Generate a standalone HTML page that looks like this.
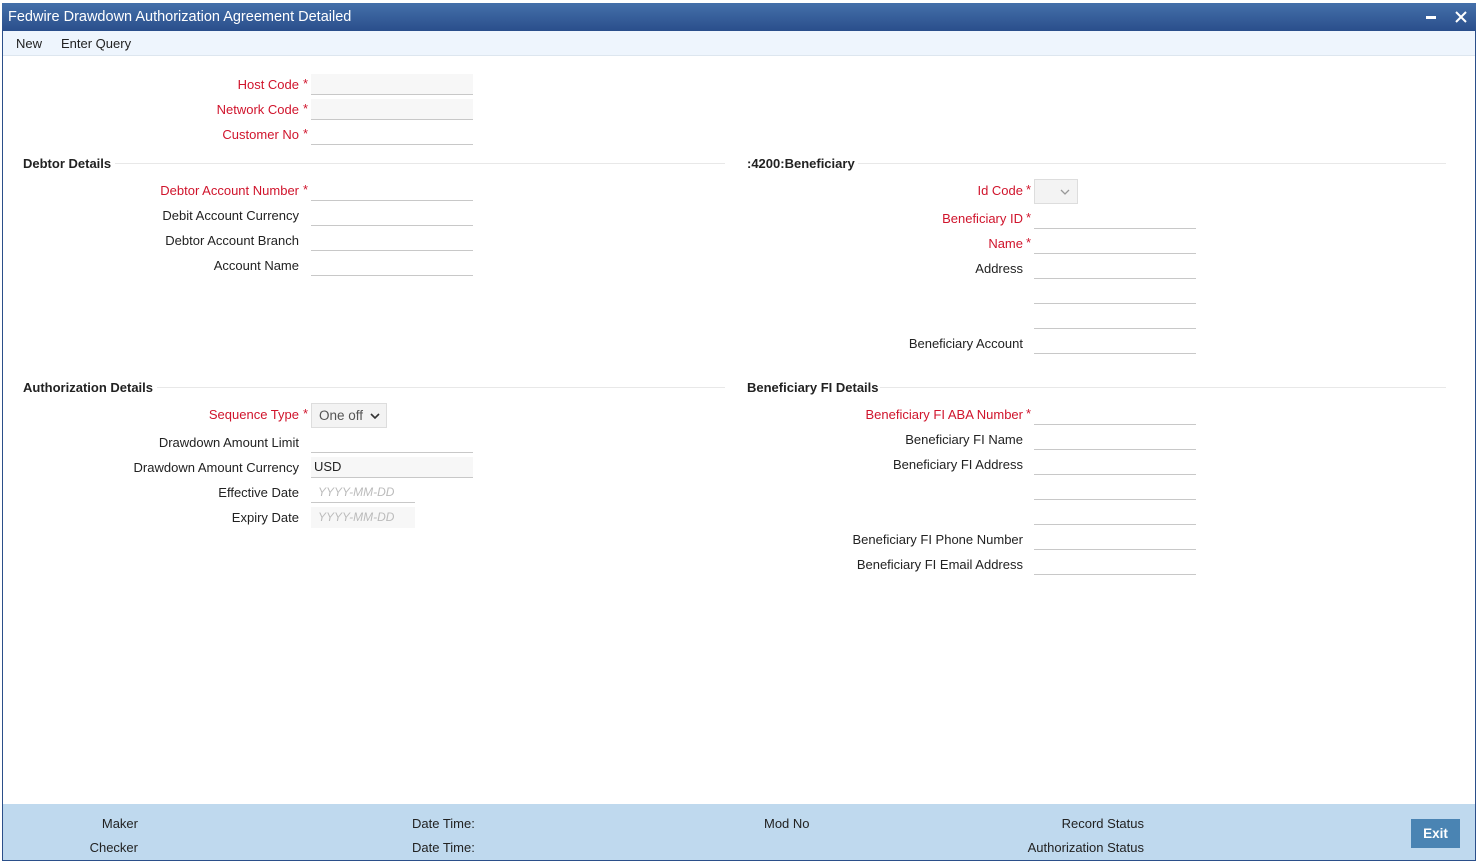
<!DOCTYPE html>
<html><head><meta charset="utf-8"><style>
*{margin:0;padding:0;box-sizing:border-box}
body{width:1477px;height:862px;position:relative;background:#fff;font-family:"Liberation Sans",Arial,sans-serif;font-size:13px;color:#222;overflow:hidden}
.a{position:absolute;white-space:nowrap}
.frame{position:absolute;left:2px;top:3px;width:1474px;height:858px;border:1px solid #2b4f8a}
.title{position:absolute;left:2px;top:3px;width:1474px;height:28px;background:linear-gradient(#4470aa,#2a4e8b);color:#fff;font-size:14.5px;line-height:28px;padding-left:6px}
.tb{position:absolute;left:3px;top:31px;width:1472px;height:25px;background:#eef5fd;border-bottom:1px solid #dde6ef}
.l{position:absolute;text-align:right;line-height:22px;height:20px;white-space:nowrap}
.r{color:#d0142c}
.st{position:absolute;color:#d0142c;line-height:22px}
.i{position:absolute;width:162px;height:21px;border-bottom:1px solid #c8c8c8}
.g{background:#f7f7f7}
.h{position:absolute;font-weight:bold;font-size:13px;line-height:17px}
.hl{position:absolute;height:1px;background:#e8e8e8}
.foot{position:absolute;left:3px;top:804px;width:1472px;height:56px;background:#bfd9ee}
</style></head><body>
<div class="frame"></div>
<div class="title">Fedwire Drawdown Authorization Agreement Detailed</div>
<div class="a" style="left:1426px;top:16px;width:10px;height:3px;background:#fff"></div>
<svg class="a" style="left:1455px;top:11px" width="12" height="12"><path d="M1 1L11 11M11 1L1 11" stroke="#fff" stroke-width="2"/></svg>
<div class="tb"><span class="a" style="left:13px;top:5px">New</span><span class="a" style="left:58px;top:5px">Enter Query</span></div>

<div class="l r" style="right:1178px;top:74px">Host Code</div><span class="st" style="left:303px;top:73px">*</span><div class="i g" style="left:311px;top:74px"></div>
<div class="l r" style="right:1178px;top:99px">Network Code</div><span class="st" style="left:303px;top:98px">*</span><div class="i g" style="left:311px;top:99px"></div>
<div class="l r" style="right:1178px;top:124px">Customer No</div><span class="st" style="left:303px;top:123px">*</span><div class="i" style="left:311px;top:124px"></div>

<div class="h" style="left:23px;top:155px">Debtor Details</div><div class="hl" style="left:115px;top:163px;width:610px"></div>
<div class="h" style="left:747px;top:155px">:4200:Beneficiary</div><div class="hl" style="left:858px;top:163px;width:588px"></div>

<div class="l r" style="right:1178px;top:180px">Debtor Account Number</div><span class="st" style="left:303px;top:179px">*</span><div class="i" style="left:311px;top:180px"></div>
<div class="l" style="right:1178px;top:205px">Debit Account Currency</div><div class="i" style="left:311px;top:205px"></div>
<div class="l" style="right:1178px;top:230px">Debtor Account Branch</div><div class="i" style="left:311px;top:230px"></div>
<div class="l" style="right:1178px;top:255px">Account Name</div><div class="i" style="left:311px;top:255px"></div>

<div class="l r" style="right:454px;top:180px">Id Code</div><span class="st" style="left:1026px;top:179px">*</span>
<div class="a" style="left:1034px;top:179px;width:44px;height:25px;background:#f3f3f3;border:1px solid #ddd"><svg class="a" style="left:25px;top:9px" width="10" height="6"><path d="M1 1L5 5L9 1" stroke="#999" fill="none" stroke-width="1.3"/></svg></div>
<div class="l r" style="right:454px;top:208px">Beneficiary ID</div><span class="st" style="left:1026px;top:207px">*</span><div class="i" style="left:1034px;top:208px"></div>
<div class="l r" style="right:454px;top:233px">Name</div><span class="st" style="left:1026px;top:232px">*</span><div class="i" style="left:1034px;top:233px"></div>
<div class="l" style="right:454px;top:258px">Address</div><div class="i" style="left:1034px;top:258px"></div>
<div class="i" style="left:1034px;top:283px"></div>
<div class="i" style="left:1034px;top:308px"></div>
<div class="l" style="right:454px;top:333px">Beneficiary Account</div><div class="i" style="left:1034px;top:333px"></div>

<div class="h" style="left:23px;top:379px">Authorization Details</div><div class="hl" style="left:157px;top:387px;width:568px"></div>
<div class="h" style="left:747px;top:379px">Beneficiary FI Details</div><div class="hl" style="left:880px;top:387px;width:566px"></div>

<div class="l r" style="right:1178px;top:404px">Sequence Type</div><span class="st" style="left:303px;top:403px">*</span>
<div class="a" style="left:311px;top:403px;width:76px;height:25px;background:#f3f3f3;border:1px solid #ddd;line-height:23px;padding-left:7px;color:#555;font-size:13.5px">One off<svg class="a" style="left:58px;top:9px" width="10" height="6"><path d="M1 1L5 5L9 1" stroke="#333" fill="none" stroke-width="1.6"/></svg></div>
<div class="l" style="right:1178px;top:432px">Drawdown Amount Limit</div><div class="i" style="left:311px;top:432px"></div>
<div class="l" style="right:1178px;top:457px">Drawdown Amount Currency</div><div class="i g" style="left:311px;top:457px;line-height:20px;padding-left:3px">USD</div>
<div class="l" style="right:1178px;top:482px">Effective Date</div><div class="i" style="left:311px;top:482px;width:104px;line-height:20px;padding-left:7px;color:#bbb;font-style:italic;font-size:12px">YYYY-MM-DD</div>
<div class="l" style="right:1178px;top:507px">Expiry Date</div><div class="i g" style="left:311px;top:507px;width:104px;line-height:20px;padding-left:7px;color:#bbb;font-style:italic;font-size:12px;border:none">YYYY-MM-DD</div>

<div class="l r" style="right:454px;top:404px">Beneficiary FI ABA Number</div><span class="st" style="left:1026px;top:403px">*</span><div class="i" style="left:1034px;top:404px"></div>
<div class="l" style="right:454px;top:429px">Beneficiary FI Name</div><div class="i" style="left:1034px;top:429px"></div>
<div class="l" style="right:454px;top:454px">Beneficiary FI Address</div><div class="i" style="left:1034px;top:454px"></div>
<div class="i" style="left:1034px;top:479px"></div>
<div class="i" style="left:1034px;top:504px"></div>
<div class="l" style="right:454px;top:529px">Beneficiary FI Phone Number</div><div class="i" style="left:1034px;top:529px"></div>
<div class="l" style="right:454px;top:554px">Beneficiary FI Email Address</div><div class="i" style="left:1034px;top:554px"></div>

<div class="foot"></div>
<div class="l" style="right:1339px;top:813px">Maker</div>
<div class="l" style="right:1339px;top:837px">Checker</div>
<div class="a" style="left:412px;top:816px">Date Time:</div>
<div class="a" style="left:412px;top:840px">Date Time:</div>
<div class="a" style="left:764px;top:816px">Mod No</div>
<div class="l" style="right:333px;top:813px">Record Status</div>
<div class="l" style="right:333px;top:837px">Authorization Status</div>
<div class="a" style="left:1411px;top:819px;width:49px;height:29px;background:#4a84b3;color:#fff;font-weight:bold;font-size:13.5px;text-align:center;line-height:29px">Exit</div>
</body></html>
